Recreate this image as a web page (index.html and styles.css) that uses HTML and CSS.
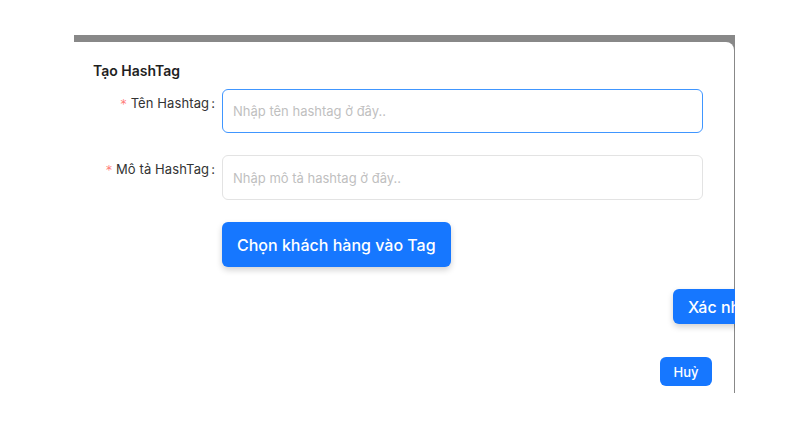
FILE: index.html
```html
<!DOCTYPE html>
<html lang="vi">
<head>
<meta charset="utf-8">
<link rel="stylesheet" href="styles.css">
</head>
<body>
<div class="frame">
  <div class="card">
    <h2 class="title">Tạo HashTag</h2>
    <div class="form">
      <label class="label"><span class="req">*</span>Tên Hashtag<span class="colon">:</span></label>
      <input class="input focused" type="text" placeholder="Nhập tên hashtag ở đây..">
      <label class="label"><span class="req">*</span>Mô tả HashTag<span class="colon">:</span></label>
      <input class="input" type="text" placeholder="Nhập mô tả hashtag ở đây..">
      <div></div>
      <div><button class="btn btn-lg">Chọn khách hàng vào Tag</button></div>
    </div>
    <div class="confirm-row"><button class="btn btn-confirm">Xác nhận</button></div>
    <div class="cancel-row"><button class="btn btn-sm">Huỷ</button></div>
  </div>
</div>
</body>
</html>
```
FILE: styles.css
```css
* { box-sizing: border-box; }
html, body { margin: 0; padding: 0; background: #fff; }
body {
  font-family: Inter, "Noto Sans", sans-serif;
  color: #1f1f1f;
  width: 810px;
  height: 447px;
  overflow: hidden;
}
.frame {
  margin: 35px 0 0 74px;
  width: 661px;
  background: #888888;
  padding: 7px 1px 0 0;
  overflow: hidden;
}
.card {
  background: #fff;
  border-top-right-radius: 8px;
  padding: 19px 22px 7px 19px;
}
.title {
  margin: 0;
  font-size: 14px;
  font-weight: 600;
  line-height: 20px;
  color: #1f1f1f;
}
.form {
  margin-top: 8px;
  display: grid;
  grid-template-columns: 122px 481px;
  column-gap: 7px;
  row-gap: 22px;
  align-items: start;
}
.label {
  font-size: 13px;
  line-height: 28px;
  text-align: right;
  color: #333;
  white-space: nowrap;
  letter-spacing: 0.1px;
}
.req {
  color: #ff7875;
  font-size: 12px;
  margin-right: 4px;
  font-family: SimSun, "DejaVu Sans", sans-serif;
}
.colon { margin-left: 2px; }
.input {
  height: 45px;
  width: 481px;
  border: 1px solid #e3e3e3;
  border-radius: 6px;
  padding: 0 10px;
  font-family: inherit;
  font-size: 13px;
  color: #262626;
  outline: none;
  background: #fff;
}
.input::placeholder { color: #bfbfbf; }
.input.focused {
  height: 44px;
  border-color: #4096ff;
}
.btn {
  font-family: inherit;
  border: none;
  background: #1677ff;
  color: #fff;
  border-radius: 6px;
  cursor: pointer;
  white-space: nowrap;
}
.btn-lg {
  height: 45px;
  padding: 0 15px;
  font-size: 16px;
  font-weight: 500;
  box-shadow: 0 3px 6px rgba(0, 0, 0, 0.18);
}
.confirm-row {
  margin-top: 22px;
  display: flex;
  height: 35px;
}
.btn-confirm {
  margin-left: 580px;
  height: 35px;
  padding: 0 15px;
  font-size: 16px;
  font-weight: 500;
  flex: none;
  box-shadow: 0 3px 6px rgba(0, 0, 0, 0.18);
}
.cancel-row {
  margin-top: 33px;
  display: flex;
  justify-content: flex-end;
}
.btn-sm {
  height: 29px;
  width: 52px;
  font-size: 13px;
  font-weight: 500;
  padding: 0;
}
```
